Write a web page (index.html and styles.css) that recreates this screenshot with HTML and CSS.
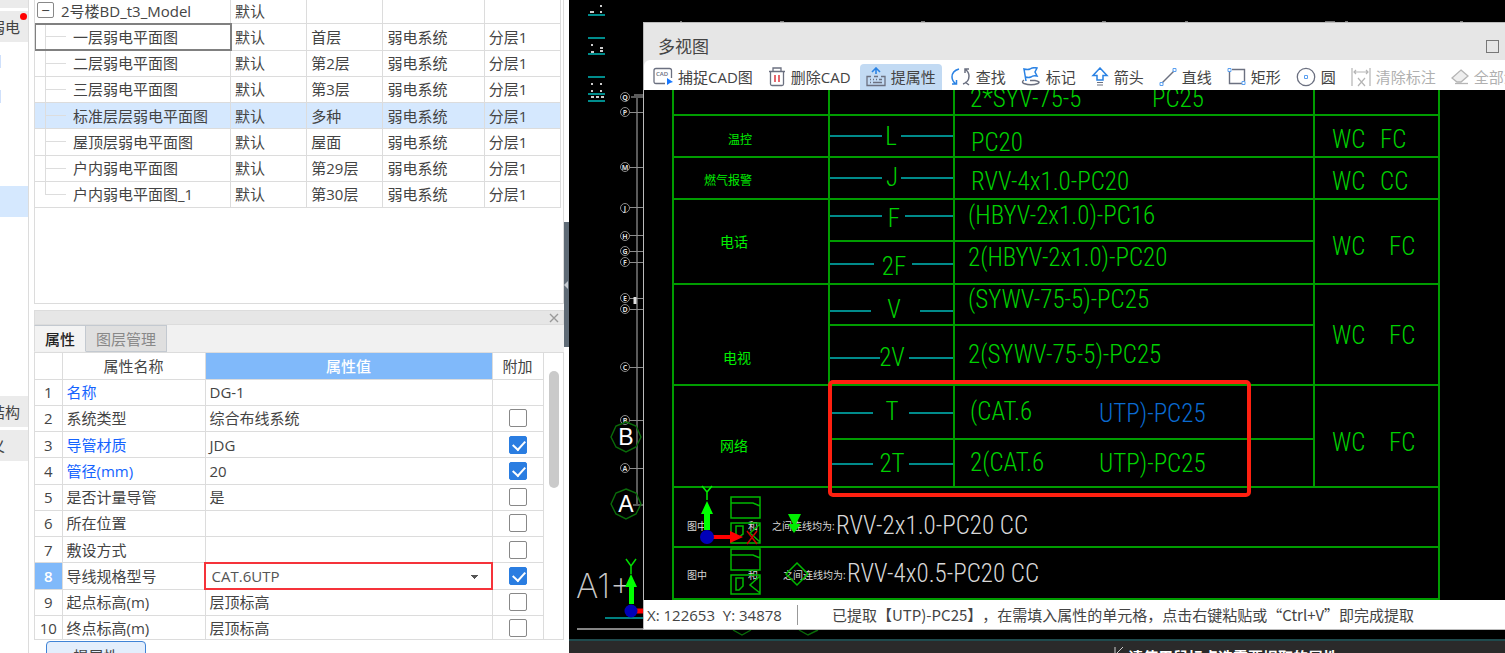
FILE: index.html
```html
<!DOCTYPE html>
<html lang="zh-CN">

<head>
  <meta charset="UTF-8">
  <meta name="viewport" content="width=device-width, initial-scale=1.0">
  <title>多视图 - 提属性</title>
  <link rel="stylesheet" href="styles.css">
</head>

<body>
  <nav class="side-nav">
    <div class="nav-item nav-top"></div>
    <a class="nav-item" href="#">弱电<span class="nav-dot"></span></a>
    <div class="nav-list nav-list-upper">
      <span class="nav-mark"></span>
      <span class="nav-mark"></span>
    </div>
    <div class="nav-item nav-active"></div>
    <div class="nav-list nav-list-lower"></div>
    <a class="nav-item" href="#">结构</a>
    <a class="nav-item nav-short" href="#">义</a>
  </nav>

  <div class="panel">
    <div class="tree-box">
      <table class="tree">
        <colgroup>
          <col class="col-name">
          <col class="col-type">
          <col class="col-floor">
          <col class="col-system">
          <col class="col-layer">
        </colgroup>
        <tbody>
          <tr class="tree-root">
            <td><button class="toggle" type="button" aria-label="折叠">−</button>2号楼BD_t3_Model</td>
            <td>默认</td><td></td><td></td><td></td>
          </tr>
          <tr class="tree-current"><td>一层弱电平面图</td><td>默认</td><td>首层</td><td>弱电系统</td><td>分层1</td></tr>
          <tr><td>二层弱电平面图</td><td>默认</td><td>第2层</td><td>弱电系统</td><td>分层1</td></tr>
          <tr><td>三层弱电平面图</td><td>默认</td><td>第3层</td><td>弱电系统</td><td>分层1</td></tr>
          <tr class="tree-selected"><td>标准层层弱电平面图</td><td>默认</td><td>多种</td><td>弱电系统</td><td>分层1</td></tr>
          <tr><td>屋顶层弱电平面图</td><td>默认</td><td>屋面</td><td>弱电系统</td><td>分层1</td></tr>
          <tr><td>户内弱电平面图</td><td>默认</td><td>第29层</td><td>弱电系统</td><td>分层1</td></tr>
          <tr class="tree-last"><td>户内弱电平面图_1</td><td>默认</td><td>第30层</td><td>弱电系统</td><td>分层1</td></tr>
        </tbody>
      </table>
    </div>

    <div class="dock">
      <div class="dock-bar">
        <button class="dock-close" type="button" aria-label="关闭">
          <svg width="10" height="10" viewBox="0 0 10 10"><path d="M1 1L9 9M9 1L1 9" stroke="#999" stroke-width="1.4" /></svg>
        </button>
      </div>
      <div class="tabs">
        <button class="tab tab-active" type="button">属性</button>
        <button class="tab" type="button">图层管理</button>
      </div>
      <div class="props-box">
        <table class="props">
          <colgroup>
            <col class="col-index">
            <col class="col-prop">
            <col class="col-value">
            <col class="col-extra">
          </colgroup>
          <thead>
            <tr><th></th><th>属性名称</th><th class="head-value">属性值</th><th>附加</th></tr>
          </thead>
          <tbody>
            <tr><td>1</td><td class="key">名称</td><td>DG-1</td><td></td></tr>
            <tr><td>2</td><td>系统类型</td><td>综合布线系统</td><td><input type="checkbox" aria-label="系统类型"></td></tr>
            <tr><td>3</td><td class="key">导管材质</td><td>JDG</td><td><input type="checkbox" aria-label="导管材质" checked></td></tr>
            <tr><td>4</td><td class="key">管径(mm)</td><td>20</td><td><input type="checkbox" aria-label="管径" checked></td></tr>
            <tr><td>5</td><td>是否计量导管</td><td>是</td><td><input type="checkbox" aria-label="是否计量导管"></td></tr>
            <tr><td>6</td><td>所在位置</td><td></td><td><input type="checkbox" aria-label="所在位置"></td></tr>
            <tr><td>7</td><td>敷设方式</td><td></td><td><input type="checkbox" aria-label="敷设方式"></td></tr>
            <tr class="prop-editing">
              <td>8</td>
              <td><label for="wire-spec">导线规格型号</label></td>
              <td class="cell-select"><select id="wire-spec"><option>CAT.6UTP</option></select></td>
              <td><input type="checkbox" aria-label="导线规格型号" checked></td>
            </tr>
            <tr><td>9</td><td>起点标高(m)</td><td>层顶标高</td><td><input type="checkbox" aria-label="起点标高"></td></tr>
            <tr><td>10</td><td>终点标高(m)</td><td>层顶标高</td><td><input type="checkbox" aria-label="终点标高"></td></tr>
          </tbody>
        </table>
        <div class="scroll"><div class="scroll-thumb"></div></div>
      </div>
      <button class="pick-btn" type="button">提属性</button>
    </div>
  </div>

  <div class="splitter">
    <button class="splitter-btn" type="button" aria-label="收起面板">
      <svg width="4" height="8" viewBox="0 0 4 8"><path d="M4 0V8L0 4Z" fill="#c5cbd1" /></svg>
    </button>
  </div>

  <main class="workspace">
    <!-- main drawing, behind the floating window -->
    <svg class="model" width="100%" height="100%">
      <g transform="translate(-569 0)">
        <path d="M588 15H605M588 38H605M588 54H605M588 77H605M588 94H605M588 101H605" stroke="#008c8c" stroke-width="2" />
        <path d="M590 12H594M600 6H602M600 12H602M591 45H593M600 48H603M591 52H594M600 51H603M591 84H593M600 84H602M591 91H593M600 91H602M591 97H594M596 97H599M601 97H604" stroke="#ccc" stroke-width="2" />
        <path d="M680 21.5H682M780 21.5H784M921 21.5H925M1102 21.5H1106M1185 21.5H1188M1325 21.5H1335M1345 21.5H1348M1460 21.5H1463" stroke="#777" />
        <path d="M637 95V505M631 97H643M634 95H643M633 505H643" stroke="#5a5a5a" stroke-width="2" />
        <g class="axis">
          <path d="M630 112.5H643M630 167.5H643M630 207.5H643M630 235.5H643M630 251.5H643M630 262.5H643M630 298.5H643M630 309.5H643M630 367.5H643M630 420.5H643M630 468.5H643" />
          <circle cx="625" cy="97" r="4.5" /><circle cx="625" cy="112" r="4.5" />
          <circle cx="625" cy="167" r="4.5" /><circle cx="625" cy="208" r="4.5" />
          <circle cx="625" cy="236" r="4.5" /><circle cx="625" cy="251" r="4.5" />
          <circle cx="625" cy="262" r="4.5" /><circle cx="625" cy="298" r="4.5" />
          <circle cx="625" cy="309" r="4.5" /><circle cx="625" cy="367" r="4.5" />
          <circle cx="625" cy="420" r="4.5" /><circle cx="625" cy="468" r="4.5" />
        </g>
        <g class="axis-name">
          <text x="625" y="100">Q</text><text x="625" y="115">P</text>
          <text x="625" y="170">M</text><text x="625" y="211">J</text>
          <text x="625" y="239">H</text><text x="625" y="254">G</text>
          <text x="625" y="265">F</text><text x="625" y="301">E</text>
          <text x="625" y="312">D</text><text x="625" y="370">C</text>
          <text x="625" y="423">B</text><text x="625" y="471">A</text>
        </g>
        <path d="M635 297V304" stroke="#ddd" stroke-width="3" />
        <g fill="none" stroke="#0a6b0a" stroke-width="1.4">
          <path d="M626 422L636 426L641 437L636 447L626 452L616 447L611 437L616 426Z" />
          <path d="M626 489L636 493L641 504L636 514L626 519L616 514L611 504L616 493Z" />
          <path d="M733 630L742 635L751 630M799 630L808 635L818 630" />
        </g>
        <text class="grid-name" x="626" y="445">B</text>
        <text class="grid-name" x="626" y="512">A</text>
        <text class="model-label" x="576" y="598">A1+</text>
        <path d="M605 618H643" stroke="#008080" stroke-width="2" />
        <path d="M577 629H643" stroke="#858585" stroke-width="2" />
        <path d="M631 611H643" stroke="#f00" stroke-width="5" />
        <path d="M629 604V587H625L631 574L637 587H634V604Z" fill="#0f0" />
        <path d="M626 559L631 566L636 559M631 566V574" fill="none" stroke="#0d0" stroke-width="1.5" />
        <circle cx="631" cy="611" r="6.5" fill="#0000b8" />
      </g>
    </svg>

    <div class="prompt">
      <svg width="10" height="12" viewBox="0 0 10 12"><path d="M1 0V12M9 0L1 8" stroke="#ccc" fill="none" /></svg>
      <span>请使用鼠标点选需要提取的属性</span>
    </div>

    <section class="window">
      <header class="window-title">
        <h1>多视图</h1>
        <button class="window-max" type="button" aria-label="最大化"></button>
      </header>

      <div class="toolbar">
        <button class="tool" type="button">
          <svg width="20" height="20" viewBox="0 0 20 20" fill="none" stroke="#6b7080" stroke-width="1.3">
            <path d="M12 16.5H3Q1 16.5 1 14.5V3.500Q1 1.500 3 1.500H16.500Q18.500 1.500 18.500 3.500V11" />
            <text x="3" y="9" class="icon-text">CAD</text>
            <path d="M14 11L20 15L17 16L14 18Z" fill="#1677ff" stroke="none" />
          </svg>捕捉CAD图
        </button>
        <button class="tool" type="button">
          <svg width="18" height="20" viewBox="0 0 18 20" fill="none" stroke="#6b7080" stroke-width="1.3">
            <path d="M1 4.500H17M5 4V1H13V4M2.500 5V17Q2.500 18.500 4 18.500H14Q15.500 18.500 15.500 17V5" />
            <path d="M7 8V15M11 8V15" stroke="#e0434b" stroke-width="1.600" />
          </svg>删除CAD
        </button>
        <button class="tool tool-active" type="button">
          <svg width="20" height="20" viewBox="0 0 20 20" fill="none" stroke="#6b7080" stroke-width="1.3">
            <path d="M10 7V1.500M6 5L10 1L14 5" stroke="#2a82e4" stroke-width="1.600" />
            <path d="M5 9.500H1V18.500H19V9.500H15M8 9.500H12" />
            <path d="M4 12.500H5M7 12.500H8M10 12.500H11M13 12.500H16M4 15.500H5M7 15.500H16" />
          </svg>提属性
        </button>
        <button class="tool" type="button">
          <svg width="20" height="20" viewBox="0 0 20 20" fill="none" stroke-width="1.5">
            <path d="M8 2Q1 4 1 10Q1 14 5 17M1 17H5.500V13" stroke="#2a82e4" />
            <path d="M12 17Q18 15 18 9Q18 5 14 2M18 2H14V6M14 15L18 18" stroke="#6b7080" />
          </svg>查找
        </button>
        <button class="tool" type="button">
          <svg width="20" height="20" viewBox="0 0 20 20" fill="none" stroke-width="1.5">
            <path d="M5 14L3 2Q7 3 9 2Q12 0 16 1L14 5L16 9Q12 8 10 10Q7 11 5 10" stroke="#2a82e4" />
            <path d="M3 13Q0 15 3 16.500Q10 19 17 16.500Q20 14.500 14 13.500H9" stroke="#6b7080" />
          </svg>标记
        </button>
        <button class="tool" type="button">
          <svg width="18" height="20" viewBox="0 0 18 20" fill="none" stroke="#2a82e4" stroke-width="1.5">
            <path d="M9 1L16 8.500H12V13H6V8.500H2Z" />
            <path d="M6 15.500H12M6 18H12" stroke="#6b7080" stroke-width="1.200" />
          </svg>箭头
        </button>
        <button class="tool" type="button">
          <svg width="18" height="20" viewBox="0 0 18 20" fill="none">
            <path d="M3 16L15 4" stroke="#6b7080" stroke-width="1.400" />
            <path d="M1 15.500H4V18.500H1ZM14 1.500H17V4.500H14Z" stroke="#5ba0f0" />
          </svg>直线
        </button>
        <button class="tool" type="button">
          <svg width="19" height="20" viewBox="0 0 19 20" fill="none">
            <path d="M5 2.500H17.500V14M15 16.500H2.500V5" stroke="#6b7080" stroke-width="1.400" />
            <path d="M1 1.500H4V4.500H1ZM15 14.500H18V17.500H15Z" stroke="#5ba0f0" />
          </svg>矩形
        </button>
        <button class="tool" type="button">
          <svg width="20" height="20" viewBox="0 0 20 20" fill="none">
            <circle cx="10" cy="10" r="8.700" stroke="#6b7080" stroke-width="1.300" />
            <path d="M8.500 8.500H11.500V11.500H8.500Z" stroke="#5ba0f0" />
          </svg>圆
        </button>
        <button class="tool" type="button" disabled>
          <svg width="20" height="20" viewBox="0 0 20 20" fill="none" stroke="#b5b5b5" stroke-width="1.200">
            <path d="M1 1V19M19 1V19M3 5H17M5 3L3 5L5 7M15 3L17 5L15 7" />
            <path d="M7 11L14 19M14 11L7 19" />
          </svg>清除标注
        </button>
        <button class="tool" type="button" disabled>
          <svg width="18" height="20" viewBox="0 0 18 20" fill="none" stroke="#b5b5b5" stroke-width="1.300">
            <path d="M10 3L17 9L10 15H6L1 11Z" fill="#eee" />
            <path d="M4 16.500H17" />
          </svg>全部清除
        </button>
      </div>

      <!-- wiring legend, a free CAD canvas -->
      <svg class="drawing" width="100%" height="100%">
        <g transform="translate(-644 -90)">
          <g class="rule">
            <path d="M673 90V600M829 90V487M954 90V487M1314 90V487M1439 90V600" />
            <path d="M673 115H1439M673 157H1439M673 199H1439M829 241H1314M673 284H1439M829 325H1314M673 385H1439M829 439H1314M673 487H1439M673 547H1439M673 599H1439" />
          </g>
          <g class="wire">
            <path d="M830 136H882M901 136H953M830 178H882M901 178H953M830 216H882M905 216H953M830 264H874M912 264H953M830 311H871M920 311H953M830 358H880M909 358H953M830 413H873M909 413H953M830 464H873M909 464H953" />
          </g>

          <g class="cad-cn">
            <text x="740" y="144">温控</text>
            <text x="728" y="185">燃气报警</text>
            <text x="734" y="247" class="cad-cn-lg">电话</text>
            <text x="737" y="363" class="cad-cn-lg">电视</text>
            <text x="734" y="451" class="cad-cn-lg">网络</text>
          </g>

          <g class="cad cad-mid">
            <text x="891" y="145">L</text>
            <text x="892" y="186">J</text>
            <text x="894" y="227">F</text>
            <text x="894" y="275">2F</text>
            <text x="894" y="318">V</text>
            <text x="892" y="366">2V</text>
            <text x="892" y="420">T</text>
            <text x="892" y="472">2T</text>
          </g>

          <g class="cad">
            <text x="970" y="107">2*SYV-75-5</text><text x="1152" y="107">PC25</text>
            <text x="971" y="151">PC20</text>
            <text x="971" y="190">RVV-4x1.0-PC20</text>
            <text x="968" y="224">(HBYV-2x1.0)-PC16</text>
            <text x="968" y="266">2(HBYV-2x1.0)-PC20</text>
            <text x="968" y="308">(SYWV-75-5)-PC25</text>
            <text x="968" y="363">2(SYWV-75-5)-PC25</text>
            <text x="970" y="420">(CAT.6</text>
            <text x="1099" y="422" class="cad-picked">UTP)-PC25</text>
            <text x="970" y="471">2(CAT.6</text>
            <text x="1099" y="472">UTP)-PC25</text>
            <text x="1332" y="148">WC</text><text x="1380" y="148">FC</text>
            <text x="1332" y="190">WC</text><text x="1380" y="190">CC</text>
            <text x="1332" y="255">WC</text><text x="1389" y="255">FC</text>
            <text x="1332" y="344">WC</text><text x="1389" y="344">FC</text>
            <text x="1332" y="451">WC</text><text x="1389" y="451">FC</text>
          </g>

          <g class="cad cad-note">
            <text x="836" y="534">RVV-2x1.0-PC20 CC</text>
            <text x="847" y="582">RVV-4x0.5-PC20 CC</text>
          </g>
          <g class="cad-note cad-note-cn">
            <text x="687" y="530">图中</text><text x="748" y="530">和</text><text x="772" y="530">之间连线均为:</text>
            <text x="687" y="579">图中</text><text x="748" y="579">和</text><text x="783" y="579">之间连线均为:</text>
          </g>

          <!-- device symbols -->
          <g fill="none" stroke="#00b800" stroke-width="1.500">
            <path d="M731 497H760V518H731ZM731 503H753L760 506M731 523H760V543H731ZM736 526H743V534L739 537H736ZM760 524L750 533L760 542" />
            <path d="M731 549H760V570H731ZM731 555H753L760 558M731 575H760V594H731ZM736 578H743V586L739 590H736ZM760 576L750 585L760 593" />
            <path d="M797 563L808 574L797 585L786 574Z" />
          </g>
          <path d="M788 514H801L796 524H801L794 533L788 524H793Z" fill="#0e0" />

          <!-- origin marker -->
          <path d="M704 530V514H701L707 501L713 514H710V530Z" fill="#0f0" />
          <path d="M702 486L707 492L712 486M707 492V500" fill="none" stroke="#0e0" stroke-width="1.500" />
          <path d="M712 535H730V531L743 537L730 543V539H712Z" fill="#f00" />
          <path d="M747 531L757 544M757 531L747 544" stroke="#c00" stroke-width="1.500" />
          <circle cx="707" cy="537" r="7" fill="#0000b8" />

          <rect x="830" y="382" width="419" height="113" rx="3" fill="none" stroke="#ff2010" stroke-width="4" />
        </g>
      </svg>

      <footer class="status">
        <span class="status-pos">X: 122653&nbsp; Y: 34878</span>
        <span class="status-msg">已提取【UTP)-PC25】，在需填入属性的单元格，点击右键粘贴或“Ctrl+V”即完成提取</span>
      </footer>
    </section>
  </main>
</body>

</html>
```
FILE: styles.css
```css
* {
  padding: 0;
  margin: 0;
  box-sizing: border-box;
}

body {
  display: flex;
  height: 100vh;
  overflow: hidden;
  background: #fff;
  color: #444;
  font-family: "Open Sans", "Noto Sans CJK SC", sans-serif;
  font-size: 15px;
  line-height: 20px;
}

button,
select {
  font: inherit;
  color: inherit;
  border: none;
  background: none;
}

table {
  border-collapse: collapse;
  table-layout: fixed;
}

/* left navigation */
.side-nav {
  display: flex;
  flex-direction: column;
  flex-shrink: 0;
  width: 29px;
  border-right: 1px solid #dcdcdc;
  overflow: hidden;
}

.nav-item {
  position: relative;
  display: flex;
  align-items: center;
  justify-content: flex-end;
  flex-shrink: 0;
  height: 31px;
  padding-right: 8px;
  margin-bottom: 3px;
  background: #ebebeb;
  color: #444;
  text-decoration: none;
  white-space: nowrap;
}

.nav-top {
  height: 8px;
}

.nav-short {
  padding-right: 23px;
}

.nav-active {
  margin: 0;
  background: #d5e8fe;
}

.nav-dot {
  position: absolute;
  top: 2px;
  right: 1px;
  width: 7px;
  height: 7px;
  border-radius: 50%;
  background: #f00;
}

.nav-list {
  display: flex;
  flex-direction: column;
  flex-shrink: 0;
  row-gap: 22px;
  padding-top: 10px;
}

.nav-list-upper {
  height: 141px;
}

.nav-list-lower {
  height: 179px;
}

.nav-mark {
  width: 1px;
  height: 13px;
  background: #cfe0fb;
}

/* docked panel */
.panel {
  display: flex;
  flex-direction: column;
  flex-shrink: 0;
  width: 530px;
  margin-left: 5px;
}

.tree-box {
  flex: 0 0 304px;
  border: 1px solid #dcdcdc;
  border-top: none;
  overflow: hidden;
}

.tree {
  width: 526px;
  height: 211px;
  margin-top: -3px;
}

.col-name {
  width: 195px;
}

.col-type,
.col-floor,
.col-layer {
  width: 76px;
}

.col-system {
  width: 101px;
}

.tree td {
  border: 1px solid #dcdcdc;
  border-left: none;
  padding-left: 4px;
  white-space: nowrap;
}

.tree td:first-child {
  padding-left: 38px;
  background: linear-gradient(#ddd, #ddd) 10px 50% / 21px 1px no-repeat,
    linear-gradient(#ddd, #ddd) 10px 0 / 1px 100% no-repeat;
}

.tree .tree-root td:first-child {
  padding-left: 2px;
  background: none;
}

.tree .tree-last td:first-child {
  background: linear-gradient(#ddd, #ddd) 10px 50% / 21px 1px no-repeat,
    linear-gradient(#ddd, #ddd) 10px 0 / 1px 50% no-repeat;
}

.tree-current td:first-child {
  outline: 2px solid #808080;
  outline-offset: -1px;
}

.tree-selected {
  background: #d5e8fe;
}

.toggle {
  width: 17px;
  height: 16px;
  margin-right: 7px;
  border: 1px solid #888;
  border-radius: 2px;
  line-height: 12px;
  vertical-align: 1px;
}

.dock {
  display: flex;
  flex-direction: column;
  margin-top: 6px;
}

.dock-bar {
  display: flex;
  align-items: center;
  justify-content: flex-end;
  height: 15px;
  padding-right: 4px;
  border: 1px solid #dcdcdc;
  background: #e6e6e6;
}

.dock-close {
  display: flex;
}

.tabs {
  display: flex;
  height: 27px;
  background: #f1f1f1;
}

.tab {
  padding: 0 10px;
  border: 1px solid #c3c9d0;
  border-left: none;
  background: #dfdfdf;
  color: #888;
}

.tab-active {
  border-left: 1px solid #dcdcdc;
  border-bottom-color: #f1f1f1;
  background: #f3f3f3;
  color: #222;
  font-weight: 500;
}

.props-box {
  display: flex;
  height: 288px;
  border: 1px solid #dcdcdc;
  overflow: hidden;
}

.props {
  flex-shrink: 0;
  width: 508px;
  height: 289px;
}

.col-index {
  width: 27px;
}

.col-prop {
  width: 143px;
}

.col-value {
  width: 287px;
}

.col-extra {
  width: 51px;
}

.props th,
.props td {
  height: 26px;
  border: 1px solid #dcdcdc;
  border-left: none;
  border-top: none;
  padding-left: 4px;
  white-space: nowrap;
}

.props th {
  padding: 0;
  font-weight: 400;
}

.props .head-value {
  background: #80b9fa;
  color: #fff;
  font-weight: 500;
}

.props td:first-child,
.props td:last-child {
  padding: 0;
  text-align: center;
}

.props .key {
  color: #1463ff;
}

.prop-editing td:first-child {
  background: #80b9fa;
  color: #fff;
  font-weight: 600;
}

.props .cell-select {
  padding: 0;
  outline: 2px solid #f5333a;
  outline-offset: -1px;
  background: linear-gradient(#555, #555) 265px 12px / 7px 1px no-repeat,
    linear-gradient(#555, #555) 266px 13px / 5px 1px no-repeat,
    linear-gradient(#555, #555) 267px 14px / 3px 1px no-repeat,
    linear-gradient(#555, #555) 268px 15px / 1px 1px no-repeat;
}

.cell-select select {
  display: block;
  appearance: none;
  width: 100%;
  height: 20px;
  padding-left: 6px;
  color: #555;
}

input[type="checkbox"] {
  display: block;
  appearance: none;
  width: 18px;
  height: 18px;
  margin: 0 auto;
  border: 1px solid #888;
  border-radius: 2px;
  background: #fff;
}

input[type="checkbox"]:checked {
  border-color: #2a7de1;
  background: #2a7de1;
}

input[type="checkbox"]:checked::before {
  content: "";
  display: block;
  width: 6px;
  height: 10px;
  margin: 1px 0 0 5px;
  border: solid #fff;
  border-width: 0 2px 2px 0;
  transform: rotate(42deg);
}

.scroll {
  flex: 1;
  padding: 18px 4px 0 5px;
}

.scroll-thumb {
  width: 10px;
  height: 117px;
  border-radius: 5px;
  background: #cacaca;
}

.pick-btn {
  align-self: flex-start;
  width: 100px;
  height: 30px;
  margin: 1px 0 0 12px;
  border: 1px solid #3f83d6;
  border-radius: 4px;
  background: #e3eefc;
}

.splitter {
  display: flex;
  flex-direction: column;
  flex-shrink: 0;
  width: 5px;
  padding-top: 222px;
}

.splitter-btn {
  display: flex;
  align-items: center;
  height: 125px;
  background: #5f6b76;
}

/* drawing area */
.workspace {
  position: relative;
  flex: 1;
  min-width: 0;
  background: #000;
  overflow: hidden;
}

.model {
  display: block;
}

.axis {
  fill: none;
  stroke: #8c8c8c;
}

.axis-name {
  fill: #ddd;
  font-size: 7px;
  font-weight: 700;
  text-anchor: middle;
}

.grid-name {
  fill: #fff;
  font-family: "Liberation Sans", sans-serif;
  font-size: 23px;
  text-anchor: middle;
}

.model-label {
  fill: #c8c8c8;
  font-family: Inter, sans-serif;
  font-size: 34px;
  font-weight: 200;
}

.prompt {
  position: absolute;
  left: 0;
  right: 0;
  bottom: 0;
  display: flex;
  column-gap: 4px;
  height: 14px;
  padding: 6px 0 0 545px;
  border-top: 2px solid #1f4a4d;
  background: #2a2a2a;
  color: #fff;
  font-weight: 700;
  white-space: nowrap;
  overflow: hidden;
}

/* floating view window */
.window {
  position: absolute;
  top: 22px;
  right: 0;
  bottom: 23px;
  left: 74px;
  display: flex;
  flex-direction: column;
  border: 1px solid #bbb;
  border-right: none;
  background: #e6e6e6;
  overflow: hidden;
}

.window-title {
  display: flex;
  align-items: center;
  justify-content: space-between;
  flex-shrink: 0;
  height: 37px;
  padding: 10px 6px 0 14px;
}

.window-title h1 {
  font-size: 17px;
  font-weight: 400;
}

.window-max {
  width: 13px;
  height: 13px;
  border: 1px solid #777;
}

.toolbar {
  display: flex;
  column-gap: 3px;
  flex-shrink: 0;
  height: 30px;
  padding: 4px 0 0 3px;
  border-radius: 6px 0 0 0;
  background: #fff;
}

.tool {
  display: flex;
  align-items: center;
  column-gap: 5px;
  flex-shrink: 0;
  padding: 0 6px;
  border-radius: 4px 4px 0 0;
  white-space: nowrap;
}

.tool-active {
  background: #c2daf3;
}

.tool:disabled {
  color: #b0b0b0;
}

.icon-text {
  fill: #6b7080;
  stroke: none;
  font-size: 6px;
  font-weight: 600;
}

.drawing {
  flex: 1;
  min-height: 0;
  background: #000;
}

.rule {
  fill: none;
  stroke: #009c00;
  stroke-width: 2;
}

.wire {
  fill: none;
  stroke: #008b8b;
  stroke-width: 2;
}

.cad {
  fill: #00d000;
  font-family: "Roboto Condensed", "Liberation Sans Narrow", "Noto Sans CJK SC", sans-serif;
  font-size: 25px;
  font-weight: 300;
}

.cad-mid,
.cad-cn {
  text-anchor: middle;
}

.cad-picked {
  fill: #0a6ad0;
}

.cad-cn {
  fill: #0e0;
  font-size: 12px;
}

.cad-cn-lg {
  font-size: 14px;
}

.cad-note {
  fill: #d8d8d8;
}

.cad-note-cn {
  font-size: 10px;
}

.status {
  display: flex;
  align-items: center;
  flex-shrink: 0;
  height: 29px;
  padding-left: 3px;
  background: #fff;
  white-space: nowrap;
}

.status-pos {
  width: 151px;
  border-right: 1px solid #999;
}

.status-msg {
  padding-left: 34px;
  font-family: "Noto Sans CJK SC", sans-serif;
  text-spacing-trim: space-all;
}
```
